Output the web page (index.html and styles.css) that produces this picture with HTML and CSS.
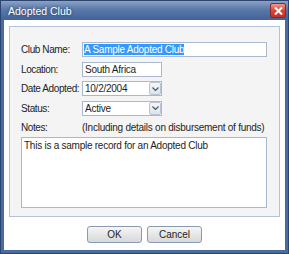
FILE: index.html
```html
<!DOCTYPE html>
<html>

<head>
	<meta charset="UTF-8">
	<title>Adopted Club</title>
	<link rel="stylesheet" href="styles.css">
</head>

<body>
	<div class="window">
		<div class="titlebar">
			<span class="title">Adopted Club</span>
			<div class="close">
				<svg width="9" height="8" viewBox="0 0 9 8">
					<path d="M1 0.5 L8 7.5 M8 0.5 L1 7.5" stroke="#fff" stroke-width="2" />
				</svg>
			</div>
		</div>

		<div class="client">
			<div class="panel">
				<div class="row">
					<label>Club Name:</label>
					<div class="field wide"><span class="selected">A Sample Adopted Club</span></div>
				</div>
				<div class="row">
					<label>Location:</label>
					<div class="field short">South Africa</div>
				</div>
				<div class="row">
					<label>Date Adopted:</label>
					<div class="field combo">
						<span class="value">10/2/2004</span>
						<span class="drop">
							<svg width="7" height="4" viewBox="0 0 7 4">
								<path d="M0.5 0.5 L3.5 3.5 L6.5 0.5" stroke="#4d5a6a" stroke-width="1.2" fill="none" />
							</svg>
						</span>
					</div>
				</div>
				<div class="row">
					<label>Status:</label>
					<div class="field combo">
						<span class="value">Active</span>
						<span class="drop">
							<svg width="7" height="4" viewBox="0 0 7 4">
								<path d="M0.5 0.5 L3.5 3.5 L6.5 0.5" stroke="#4d5a6a" stroke-width="1.2" fill="none" />
							</svg>
						</span>
					</div>
				</div>
				<div class="row notes-row">
					<label>Notes:</label>
					<span class="hint">(Including details on disbursement of funds)</span>
				</div>
				<div class="notes">This is a sample record for an Adopted Club</div>
			</div>

			<div class="buttons">
				<button>OK</button>
				<button>Cancel</button>
			</div>
		</div>
	</div>
</body>

</html>
```

FILE: styles.css
```css
html,
body {
	margin: 0;
	padding: 0;
}

body {
	font-family: "Liberation Sans", Arial, sans-serif;
	font-size: 10px;
	letter-spacing: -0.25px;
	color: #1e1e1e;
}

.window {
	width: 289px;
	height: 254px;
	box-sizing: border-box;
	background: #4a6b9e;
	border: 1px solid #2c4470;
	display: flex;
	flex-direction: column;
}

.titlebar {
	height: 19px;
	display: flex;
	align-items: center;
	justify-content: space-between;
	padding: 0 2px 0 7px;
	background: linear-gradient(#8ca2c4, #5a78a8 45%, #42639a);
}

.title {
	color: #fff;
	font-size: 10.5px;
	letter-spacing: 0;
	text-shadow: 0 0 3px #1c3560;
}

.close {
	width: 14px;
	height: 13px;
	display: flex;
	align-items: center;
	justify-content: center;
	border: 1px solid #8a2a20;
	border-radius: 2px;
	background: linear-gradient(#f09a8a, #d8483a 50%, #c23224);
}

.client {
	flex: 1;
	margin: 0 3px 3px 3px;
	background: #fff;
	display: flex;
	flex-direction: column;
	padding: 6px 5px 0 5px;
}

.panel {
	height: 191px;
	box-sizing: border-box;
	background: #f4f4f4;
	border: 1px solid #b4c3d6;
	padding: 15px 12px 0 11px;
}

.row {
	display: flex;
	align-items: center;
	height: 15px;
	margin-bottom: 4.5px;
	white-space: nowrap;
}

.row label {
	width: 61px;
	flex: none;
	letter-spacing: -0.4px;
}

.field {
	height: 15px;
	box-sizing: border-box;
	background: #fff;
	border: 1px solid #a9b8cc;
	display: flex;
	align-items: center;
	padding-left: 2px;
	white-space: nowrap;
	overflow: hidden;
}

.wide {
	flex: 1;
	padding-left: 1px;
}

.short {
	width: 80px;
}

.combo {
	width: 80px;
	justify-content: space-between;
	padding-right: 0;
}

.selected {
	background: #3399ff;
	color: #fff;
}

.drop {
	width: 12px;
	height: 13px;
	box-sizing: border-box;
	border: 1px solid #b8c4d4;
	border-radius: 2px;
	background: linear-gradient(#f4f6f9, #dde3ea);
	display: flex;
	align-items: center;
	justify-content: center;
}

.notes-row {
	margin-bottom: 2px;
}

.notes {
	height: 71px;
	box-sizing: border-box;
	background: #fff;
	border: 1px solid #a9b8cc;
	padding: 2px 2px;
}

.buttons {
	display: flex;
	justify-content: center;
	gap: 5px;
	padding-top: 9px;
}

button {
	width: 55px;
	height: 17px;
	padding: 0;
	font-family: "Liberation Sans", Arial, sans-serif;
	font-size: 10px;
	color: #1e1e1e;
	border: 1px solid #8a9ab0;
	border-radius: 3px;
	background: linear-gradient(#f6f6f6, #e6e6e6 50%, #d6d9de);
}
```
